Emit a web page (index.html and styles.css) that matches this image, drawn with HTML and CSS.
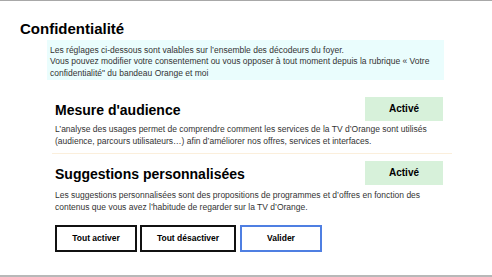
FILE: index.html
```html
<!DOCTYPE html>
<html lang="fr">
<head>
  <meta charset="UTF-8" />
  <title>Confidentialité</title>
  <link rel="stylesheet" href="styles.css">
</head>
<body>
  <div class="screen">
    <h1 class="title">Confidentialité</h1>
    <div class="notice">
      Les réglages ci-dessous sont valables sur l’ensemble des décodeurs du foyer.<br>
      Vous pouvez modifier votre consentement ou vous opposer à tout moment depuis la rubrique « Votre confidentialité" du bandeau Orange et moi
    </div>

    <!-- Mesure d'audience -->
    <div class="setting with-line">
      <div class="setting-head">
        <h2>Mesure d'audience</h2>
        <div class="status">Activé</div>
      </div>
      <p>L’analyse des usages permet de comprendre comment les services de la TV d’Orange sont utilisés (audience, parcours utilisateurs…) afin d’améliorer nos offres, services et interfaces.</p>
    </div>

    <!-- Suggestions -->
    <div class="setting">
      <div class="setting-head">
        <h2>Suggestions personnalisées</h2>
        <div class="status">Activé</div>
      </div>
      <p>Les suggestions personnalisées sont des propositions de programmes et d’offres en fonction des contenus que vous avez l’habitude de regarder sur la TV d’Orange.</p>
    </div>

    <div class="actions">
      <button class="btn btn-small">Tout activer</button>
      <button class="btn btn-wide">Tout désactiver</button>
      <button class="btn btn-small focused">Valider</button>
    </div>
  </div>
</body>
</html>
```

FILE: styles.css
```css
* {
  margin: 0;
  padding: 0;
  box-sizing: border-box;
}
html, body {
  width: 100%;
  height: 100%;
  font-family: 'Liberation Sans', Arial, sans-serif;
  background: #fff;
  color: #000;
}
.screen {
  height: 277px;
  border-top: 1px solid #a8a8a8;
  border-bottom: 2px solid #b8b8b8;
  overflow: hidden;
}
.title {
  font-size: 15px;
  line-height: 18px;
  font-weight: bold;
  margin: 19px 0 2px 20px;
}
.notice {
  margin-left: 47px;
  width: 397px;
  height: 40px;
  padding: 5px 3px 0;
  background: #eafdfd;
  font-size: 8.5px;
  line-height: 11.4px;
  color: #333;
}
.setting {
  margin-left: 52px;
  width: 400px;
  padding: 0 9px 0 3px;
}
.setting.with-line {
  margin-top: 17px;
  padding-bottom: 6px;
  border-bottom: 1px solid #fbefdc;
}
.setting-head {
  display: flex;
  justify-content: space-between;
  align-items: center;
  height: 24px;
}
.setting + .setting {
  margin-top: 7px;
}
.setting h2 {
  font-size: 14px;
  line-height: 17px;
  font-weight: bold;
  margin-top: 3px;
}
.status {
  width: 78px;
  height: 24px;
  line-height: 24px;
  text-align: center;
  background: #d7f1da;
  font-size: 10px;
  font-weight: bold;
}
.setting p {
  margin-top: 3px;
  font-size: 8.5px;
  line-height: 11.7px;
  color: #333;
}
.setting + .setting p {
  margin-top: 5px;
}
.actions {
  display: flex;
  gap: 3px;
  margin: 11px 0 0 55px;
}
.btn {
  height: 27px;
  background: #fff;
  border: 2px solid #111;
  font-family: inherit;
  font-size: 8.5px;
  font-weight: bold;
  color: #000;
}
.btn-small {
  width: 82px;
}
.btn-wide {
  width: 96px;
}
.btn.focused {
  margin-left: 1px;
  border-color: #4f7fe2;
}
```
